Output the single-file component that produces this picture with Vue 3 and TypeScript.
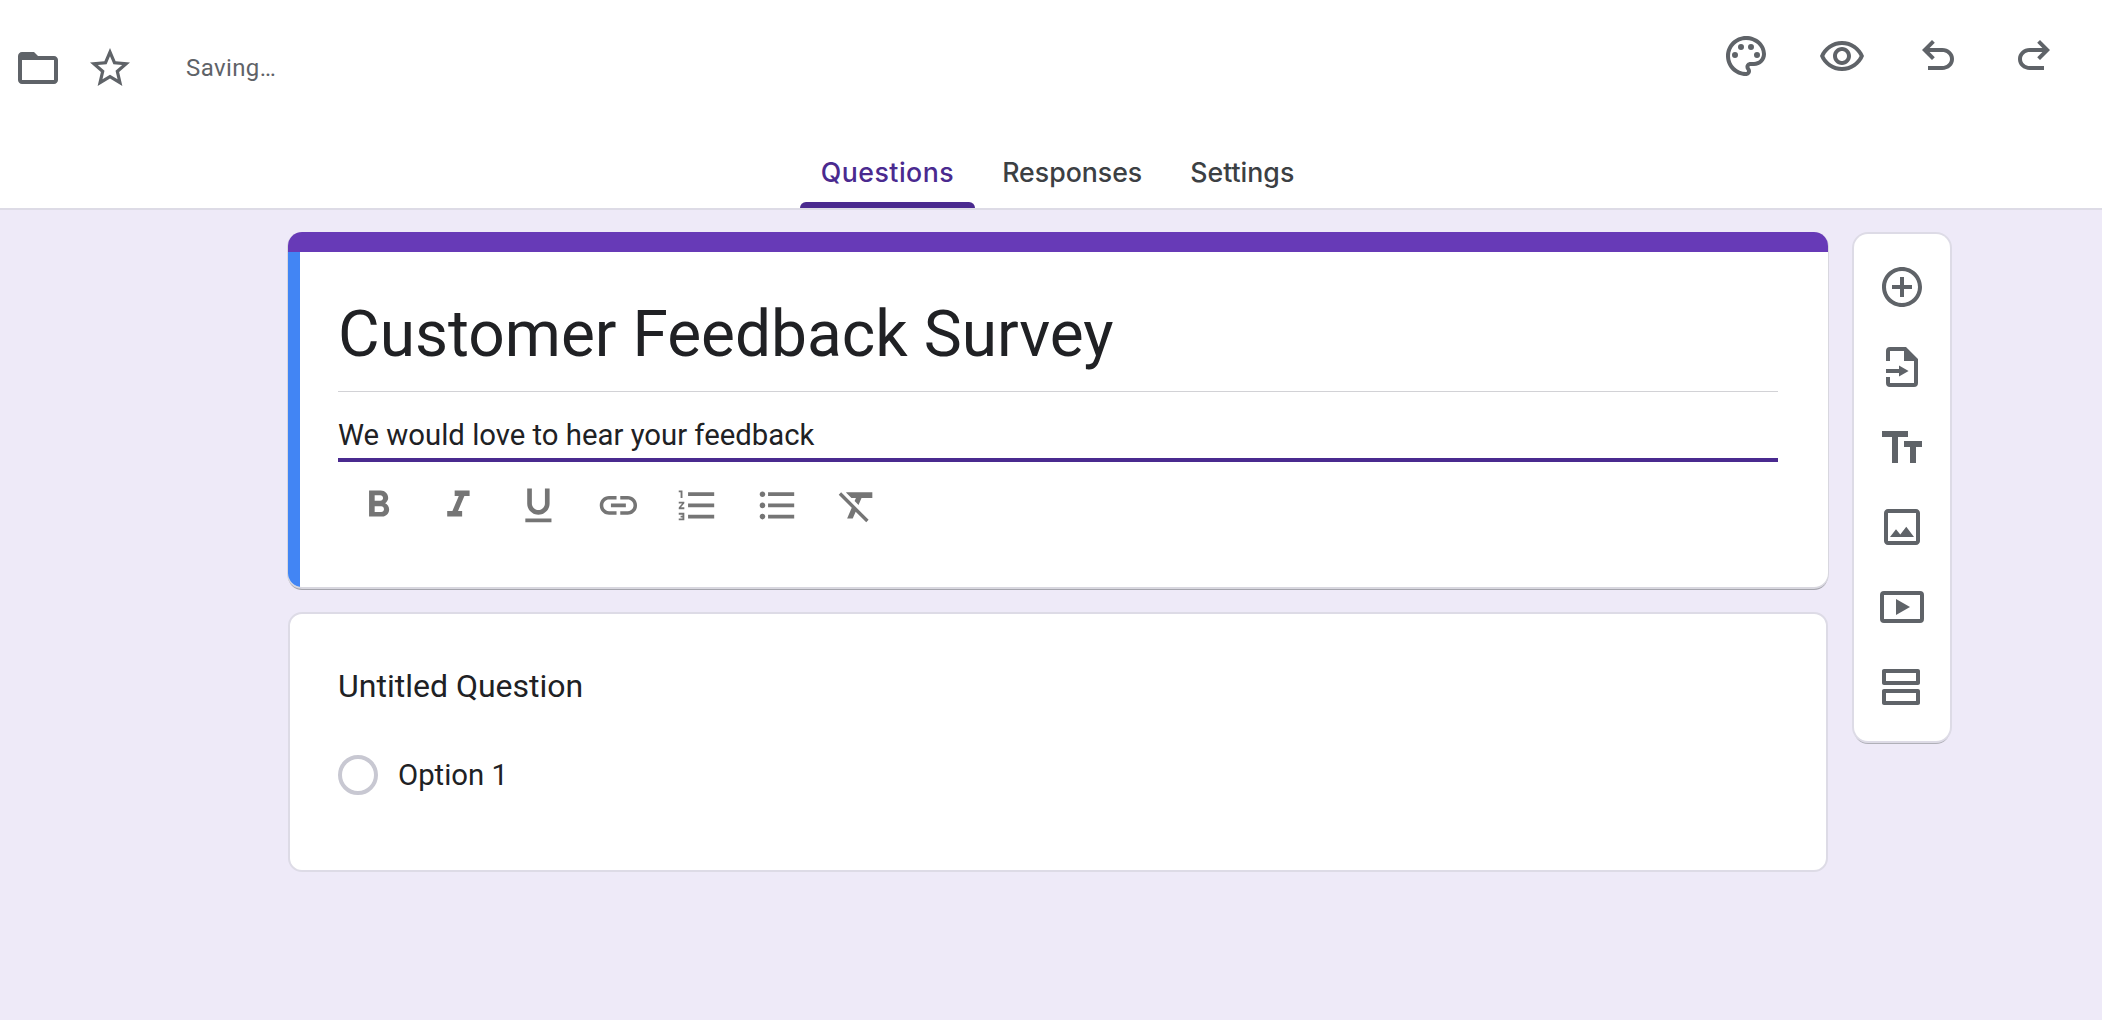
<script setup lang="ts">
interface Icon {
  name: string
  d: string
}

const formatIcons: Icon[] = [
  { name: 'bold', d: 'M15.6 10.79c.97-.67 1.65-1.77 1.65-2.79 0-2.26-1.75-4-4-4H7v14h7.04c2.09 0 3.71-1.7 3.71-3.79 0-1.52-.86-2.82-2.15-3.42zM10 6.5h3c.83 0 1.5.67 1.5 1.5s-.67 1.5-1.5 1.5h-3v-3zm3.5 9H10v-3h3.5c.83 0 1.5.67 1.5 1.5s-.67 1.5-1.5 1.5z' },
  { name: 'italic', d: 'M10 4v3h2.21l-3.42 8H6v3h8v-3h-2.21l3.42-8H18V4z' },
  { name: 'underline', d: 'M12 17c3.31 0 6-2.69 6-6V3h-2.5v8c0 1.93-1.57 3.5-3.5 3.5S8.5 12.93 8.5 11V3H6v8c0 3.31 2.69 6 6 6zm-7 2v2h14v-2H5z' },
  { name: 'link', d: 'M3.9 12c0-1.71 1.39-3.1 3.1-3.1h4V7H7c-2.76 0-5 2.24-5 5s2.24 5 5 5h4v-1.9H7c-1.71 0-3.1-1.39-3.1-3.1zM8 13h8v-2H8v2zm9-6h-4v1.9h4c1.71 0 3.1 1.39 3.1 3.1s-1.39 3.1-3.1 3.1h-4V17h4c2.76 0 5-2.24 5-5s-2.24-5-5-5z' },
  { name: 'numbered', d: 'M2 17h2v.5H3v1h1v.5H2v1h3v-4H2v1zm1-9h1V4H2v1h1v3zm-1 3h1.8L2 13.1v.9h3v-1H3.2L5 10.9V10H2v1zm5-6v2h14V5H7zm0 14h14v-2H7v2zm0-6h14v-2H7v2z' },
  { name: 'bulleted', d: 'M4 10.5c-.83 0-1.5.67-1.5 1.5s.67 1.5 1.5 1.5 1.5-.67 1.5-1.5-.67-1.5-1.5-1.5zm0-6c-.83 0-1.5.67-1.5 1.5S3.17 7.5 4 7.5 5.5 6.83 5.5 6 4.83 4.5 4 4.5zm0 12c-.83 0-1.5.68-1.5 1.5s.68 1.5 1.5 1.5 1.5-.68 1.5-1.5-.67-1.5-1.5-1.5zM7 19h14v-2H7v2zm0-6h14v-2H7v2zm0-8v2h14V5H7z' },
  { name: 'clear', d: 'M3.27 5L2 6.27l6.97 6.97L6.5 19h3l1.57-3.66L16.73 21 18 19.73 3.55 5.27 3.27 5zM6 5v.18L8.82 8h2.4l-.72 1.68 2.1 2.1L14.21 8H20V5H6z' },
]

const sideIcons: Icon[] = [
  { name: 'add', d: 'M13 7h-2v4H7v2h4v4h2v-4h4v-2h-4V7zm-1-5C6.48 2 2 6.48 2 12s4.48 10 10 10 10-4.48 10-10S17.52 2 12 2zm0 18c-4.41 0-8-3.59-8-8s3.59-8 8-8 8 3.59 8 8-3.59 8-8 8z' },
  { name: 'import', d: 'M6 2h8l6 6v12a2 2 0 0 1-2 2H6a2 2 0 0 1-2-2v-3h2v3h12V9h-5V4H6v5H4V4a2 2 0 0 1 2-2zM4 13h6.5v-1.7l4.8 2.7-4.8 2.7V15H4z' },
  { name: 'title', d: 'M2 4v3h5v13h3V7h5V4H2zm11 5v3h3v8h3v-8h3V9h-9z' },
  { name: 'image', d: 'M19 5v14H5V5h14m0-2H5c-1.1 0-2 .9-2 2v14c0 1.1.9 2 2 2h14c1.1 0 2-.9 2-2V5c0-1.1-.9-2-2-2zm-4.86 8.86l-3 3.87L9 13.14 6 17h12l-3.86-5.14z' },
  { name: 'video', d: 'M21 4H3a2 2 0 0 0-2 2v12a2 2 0 0 0 2 2h18a2 2 0 0 0 2-2V6a2 2 0 0 0-2-2zm0 14H3V6h18v12zM9 8v8l7-4z' },
  { name: 'section', d: 'M20 13H3c-.55 0-1 .45-1 1v6c0 .55.45 1 1 1h17c.55 0 1-.45 1-1v-6c0-.55-.45-1-1-1zm-1 6H4v-4h15v4zM20 3H3c-.55 0-1 .45-1 1v6c0 .55.45 1 1 1h17c.55 0 1-.45 1-1V4c0-.55-.45-1-1-1zm-1 6H4V5h15v4z' },
]

const topIcons: Icon[] = [
  { name: 'palette', d: 'M12 22C6.49 22 2 17.51 2 12S6.49 2 12 2s10 4.04 10 9c0 3.31-2.69 6-6 6h-1.77c-.28 0-.5.22-.5.5 0 .12.05.23.13.33.41.47.64 1.06.64 1.67 0 1.38-1.12 2.5-2.5 2.5zm0-18c-4.41 0-8 3.59-8 8s3.59 8 8 8c.28 0 .5-.22.5-.5 0-.16-.08-.28-.14-.35-.41-.46-.63-1.05-.63-1.65 0-1.38 1.12-2.5 2.5-2.5H16c2.21 0 4-1.79 4-4 0-3.86-3.59-7-8-7zM6.5 10a1.5 1.5 0 1 0 0 3 1.5 1.5 0 0 0 0-3zM9.5 6a1.5 1.5 0 1 0 0 3 1.5 1.5 0 0 0 0-3zM14.5 6a1.5 1.5 0 1 0 0 3 1.5 1.5 0 0 0 0-3zM17.5 10a1.5 1.5 0 1 0 0 3 1.5 1.5 0 0 0 0-3z' },
  { name: 'preview', d: 'M12 6.5c3.79 0 7.17 2.13 8.82 5.5-1.65 3.37-5.02 5.5-8.82 5.5S4.83 15.37 3.18 12C4.83 8.63 8.21 6.5 12 6.5m0-2C7 4.5 2.73 7.61 1 12c1.73 4.39 6 7.5 11 7.5s9.27-3.11 11-7.5c-1.73-4.39-6-7.5-11-7.5zm0 5c1.38 0 2.5 1.12 2.5 2.5s-1.12 2.5-2.5 2.5-2.5-1.12-2.5-2.5 1.12-2.5 2.5-2.5m0-2c-2.48 0-4.5 2.02-4.5 4.5s2.02 4.5 4.5 4.5 4.5-2.02 4.5-4.5-2.02-4.5-4.5-4.5z' },
  { name: 'undo', d: 'M7 19v-2h7.1c1.05 0 1.96-.33 2.74-1S18 14.47 18 13.5s-.39-1.83-1.16-2.5-1.69-1-2.74-1H7.8l2.6 2.6L9 14 4 9l5-5 1.4 1.4L7.8 8h6.3c1.62 0 3 .53 4.18 1.58C19.43 10.63 20 11.95 20 13.5s-.57 2.87-1.72 3.92C17.1 18.47 15.72 19 14.1 19H7z' },
  { name: 'redo', d: 'M9.9 19c-1.62 0-3-.53-4.18-1.58C4.57 16.37 4 15.05 4 13.5s.57-2.87 1.72-3.92C6.9 8.53 8.28 8 9.9 8h6.3l-2.6-2.6L15 4l5 5-5 5-1.4-1.4 2.6-2.6H9.9c-1.05 0-1.96.33-2.74 1S6 12.53 6 13.5s.39 1.83 1.16 2.5 1.69 1 2.74 1H17v2H9.9z' },
]

const tabs = ['Questions', 'Responses', 'Settings']
</script>

<template>
  <div class="page">
    <header class="header">
      <div class="top">
        <div class="left">
          <svg class="icon48 folder" viewBox="0 0 24 24"><path d="M20 6h-8l-2-2H4c-1.1 0-1.99.9-1.99 2L2 18c0 1.1.9 2 2 2h16c1.1 0 2-.9 2-2V8c0-1.1-.9-2-2-2zm0 12H4V8h16v10z" /></svg>
          <svg class="icon48 star" viewBox="0 0 24 24"><path d="M22 9.24l-7.19-.62L12 2 9.19 8.63 2 9.24l5.46 4.73L5.82 21 12 17.27 18.18 21l-1.63-7.03L22 9.24zM12 15.4l-3.76 2.27 1-4.28-3.32-2.88 4.38-.38L12 6.1l1.71 4.04 4.38.38-3.32 2.88 1 4.28L12 15.4z" /></svg>
          <span class="saving">Saving…</span>
        </div>
        <div class="right">
          <span v-for="icon in topIcons" :key="icon.name" class="top-btn">
            <svg class="icon48" viewBox="0 0 24 24"><path :d="icon.d" /></svg>
          </span>
        </div>
      </div>
      <nav class="tabs">
        <div v-for="(tab, i) in tabs" :key="tab" class="tab" :class="{ active: i === 0 }">{{ tab }}</div>
      </nav>
    </header>

    <main class="main">
      <div class="forms">
        <section class="card title-card">
          <div class="title-bar"></div>
          <div class="title-body">
            <h1 class="title">Customer Feedback Survey</h1>
            <div class="desc">We would love to hear your feedback</div>
            <div class="toolbar">
              <span v-for="icon in formatIcons" :key="icon.name" class="fmt-btn">
                <svg class="fmt-icon" viewBox="0 0 24 24"><path :d="icon.d" /></svg>
              </span>
            </div>
          </div>
        </section>

        <section class="card question-card">
          <div class="question">Untitled Question</div>
          <div class="option">
            <span class="radio"></span>
            <span class="option-label">Option 1</span>
          </div>
        </section>
      </div>

      <aside class="side">
        <span v-for="icon in sideIcons" :key="icon.name" class="side-btn">
          <svg class="icon48" viewBox="0 0 24 24"><path :d="icon.d" /></svg>
        </span>
      </aside>
    </main>
  </div>
</template>

<style scoped>
.page {
  min-height: 1020px;
  background: #eeeaf8;
  font-family: Roboto, "Liberation Sans", sans-serif;
  color: #202124;
  overflow: hidden;
}
.header {
  height: 208px;
  background: #fff;
  border-bottom: 2px solid #dddbe6;
  display: flex;
  flex-direction: column;
  justify-content: space-between;
}
.top {
  display: flex;
  justify-content: space-between;
  align-items: flex-start;
}
.left {
  display: flex;
  align-items: center;
  padding: 44px 0 0 14px;
}
.folder {
  margin-right: 24px;
}
.saving {
  margin-left: 52px;
  font-size: 24px;
  color: #5f6368;
  letter-spacing: 0.4px;
}
.right {
  display: flex;
  padding: 32px 20px 0 0;
}
.top-btn {
  width: 96px;
  display: flex;
  justify-content: center;
}
.icon48 {
  width: 48px;
  height: 48px;
  display: block;
  fill: #5f6368;
}
.tabs {
  display: flex;
  justify-content: center;
  gap: 6px;
  padding-left: 13px;
}
.tab {
  height: 58px;
  padding: 0 21px;
  box-sizing: border-box;
  font-family: Inter, Roboto, sans-serif;
  font-size: 26.7px;
  font-weight: 500;
  line-height: 44px;
  color: #3c4043;
  position: relative;
}
.tab.active {
  color: #4a2a8f;
  letter-spacing: 0.5px;
}
.tab.active::after {
  content: "";
  position: absolute;
  left: 0;
  right: 0;
  bottom: 0;
  height: 6px;
  background: #4a2a8f;
  border-radius: 6px 6px 0 0;
}
.main {
  display: flex;
  align-items: flex-start;
  padding: 22px 0 0 288px;
  gap: 25px;
}
.forms {
  width: 1540px;
  display: flex;
  flex-direction: column;
  gap: 25px;
}
.card {
  background: #fff;
  border-radius: 14px;
}
.title-card {
  overflow: hidden;
  box-shadow: 0 1px 0 1px #d8d7df, 0 3px 0 0 #a5a5ad;
}
.title-bar {
  height: 20px;
  background: #673ab7;
}
.title-body {
  border-left: 12px solid #4285f4;
  padding: 48px 50px 0 38px;
  height: 287px;
  box-sizing: content-box;
}
.title {
  margin: 0;
  font-size: 64px;
  font-weight: 400;
  line-height: 70px;
  height: 91px;
  border-bottom: 1px solid #d2d2d6;
  box-sizing: content-box;
}
.desc {
  margin-top: 23px;
  font-size: 29.3px;
  line-height: 40px;
  padding-bottom: 3px;
  border-bottom: 4px solid #4a2a8f;
}
.toolbar {
  display: flex;
  margin: 21px 0 0 1px;
}
.fmt-btn {
  width: 79.7px;
  display: flex;
  justify-content: center;
}
.fmt-icon {
  width: 44.8px;
  height: 44.8px;
  display: block;
  fill: #757575;
}
.question-card {
  height: 260px;
  box-sizing: border-box;
  border: 2px solid #dddbe6;
  padding: 52px 0 0 48px;
}
.question {
  font-size: 32px;
  line-height: 40px;
}
.option {
  margin-top: 49px;
  display: flex;
  align-items: center;
  gap: 20px;
}
.radio {
  width: 40px;
  height: 40px;
  box-sizing: border-box;
  border: 4px solid #c8c8d2;
  border-radius: 50%;
}
.option-label {
  font-size: 29.3px;
  line-height: 40px;
}
.side {
  width: 96px;
  padding: 13px 0 14px;
  background: #fff;
  border-radius: 14px;
  box-shadow: 0 0 0 2px #dddbe6, 0 3px 0 0 #b0b0b8;
  margin: 2px 0 0 1px;
  display: flex;
  flex-direction: column;
}
.side-btn {
  height: 80px;
  display: flex;
  align-items: center;
  justify-content: center;
}
</style>
